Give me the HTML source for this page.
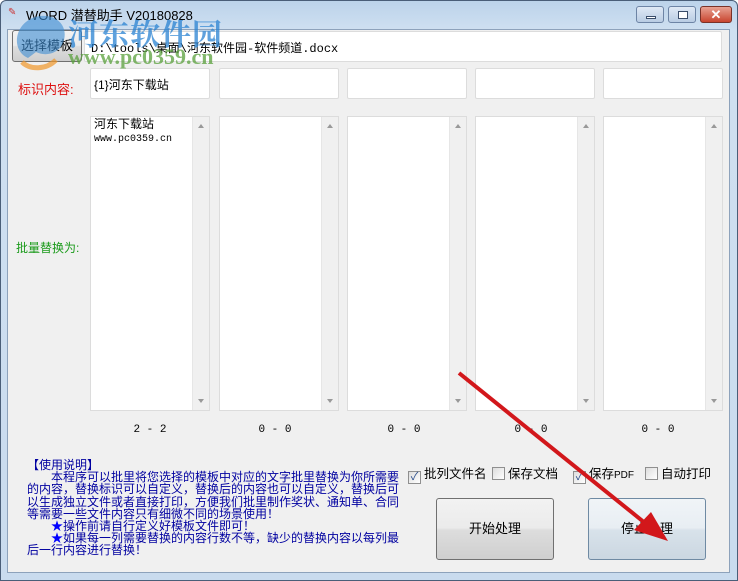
<!DOCTYPE html>
<html><head><meta charset="utf-8"><style>
*{margin:0;padding:0;box-sizing:border-box}
body{width:738px;height:581px;overflow:hidden;background:#fff;font-family:"Liberation Sans","Noto Sans CJK SC",sans-serif;font-size:12px;position:relative}
.win{position:absolute;left:0;top:0;width:738px;height:581px;background:linear-gradient(#bcd3ea,#cfe0f1 30px,#c9dbee);border:1px solid #4a5e78;border-radius:6px 6px 0 0}
.client{position:absolute;left:7px;top:29px;width:723px;height:544px;background:#f0f0f0;border:1px solid #8da2bb}
.a{position:absolute}
.tb{border:1px solid #dcdcdc;background:#fff;border-radius:2px}
.ta{border:1px solid #dcdcdc;background:#fff}
.sb{position:absolute;right:0;top:0;width:17px;height:100%;background:#f0f0f0;border-left:1px solid #e6e6e6}
.sb:before{content:"";position:absolute;left:5px;top:7px;border:3.5px solid transparent;border-bottom:4px solid #999;border-top:0}
.sb:after{content:"";position:absolute;left:5px;bottom:7px;border:3.5px solid transparent;border-top:4px solid #999;border-bottom:0}
.cnt{position:absolute;top:424px;width:120px;text-align:center;font-family:"Liberation Mono",monospace;font-size:11px}
.btn{position:absolute;border:1px solid #707070;border-radius:3px;background:linear-gradient(#f2f2f2,#ebebeb 48%,#dddddd 52%,#cfcfcf);text-align:center;font-size:13px}
.cb{position:absolute;top:463px;font-size:12.5px;white-space:nowrap}
.cb i{display:inline-block;width:13px;height:13px;border:1px solid #8f8f8f;background:linear-gradient(135deg,#ddd,#fff);vertical-align:-2px;margin-right:3px;font-style:normal;font-size:11px;line-height:11px;color:#2a4d8c;text-align:center}
.ins{position:absolute;left:27px;top:459px;color:#0000a0;font-size:12px;line-height:12.2px;white-space:nowrap;font-family:"Noto Sans CJK SC",sans-serif}
</style></head><body>
<div class="win"></div>
<div class="a" style="left:8px;top:7px;width:14px;height:8px;color:#c33;font-size:10px">✎</div>
<div class="a" style="left:26px;top:5px;font-size:13px;color:#000">WORD 潜替助手 V20180828</div>
<div class="a" style="left:636px;top:6px;width:28px;height:17px;border:1px solid #6d84a5;border-radius:3px;background:linear-gradient(#dfe9f5,#b9cce3)"><div class="a" style="left:9px;top:9px;width:10px;height:3px;background:#fff;border:1px solid #3a4d6a"></div></div>
<div class="a" style="left:668px;top:6px;width:28px;height:17px;border:1px solid #6d84a5;border-radius:3px;background:linear-gradient(#dfe9f5,#b9cce3)"><div class="a" style="left:9px;top:4px;width:10px;height:8px;border:1px solid #3a4d6a;background:#fff"></div></div>
<div class="a" style="left:700px;top:6px;width:32px;height:17px;border:1px solid #7a3228;border-radius:3px;background:linear-gradient(#e8a293,#c8452f);color:#fff;font-weight:bold;text-align:center;font-size:13px;line-height:15px">✕</div>
<div class="client"></div>
<div class="btn" style="left:12px;top:30px;width:70px;height:32px;line-height:30px">选择模板</div>
<div class="a tb" style="left:84px;top:31px;width:638px;height:31px;padding:7px 6px;font-family:'Liberation Mono','Noto Sans CJK SC',monospace;font-size:12px">D:\tools\桌面\河东软件园-软件频道.docx</div>
<div class="a" style="left:18px;top:79px;color:#d11;font-size:13px">标识内容:</div>
<div class="a tb" style="left:90px;top:68px;width:120px;height:31px;padding:7px 3px;font-size:12px">{1}河东下载站</div>
<div class="a tb" style="left:219px;top:68px;width:120px;height:31px"></div>
<div class="a tb" style="left:347px;top:68px;width:120px;height:31px"></div>
<div class="a tb" style="left:475px;top:68px;width:120px;height:31px"></div>
<div class="a tb" style="left:603px;top:68px;width:120px;height:31px"></div>
<div class="a" style="left:16px;top:239px;color:#1a9a1a;font-size:12px">批量替换为:</div>
<div class="a ta" style="left:90px;top:116px;width:120px;height:295px;padding:1px 3px;font-size:12px;line-height:13px">河东下载站<br><span style="font-family:'Liberation Mono',monospace;font-size:10px">www.pc0359.cn</span><div class="sb"></div></div>
<div class="a ta" style="left:219px;top:116px;width:120px;height:295px"><div class="sb"></div></div>
<div class="a ta" style="left:347px;top:116px;width:120px;height:295px"><div class="sb"></div></div>
<div class="a ta" style="left:475px;top:116px;width:120px;height:295px"><div class="sb"></div></div>
<div class="a ta" style="left:603px;top:116px;width:120px;height:295px"><div class="sb"></div></div>
<div class="cnt" style="left:90px">2 - 2</div>
<div class="cnt" style="left:215px">0 - 0</div>
<div class="cnt" style="left:344px">0 - 0</div>
<div class="cnt" style="left:471px">0 - 0</div>
<div class="cnt" style="left:598px">0 - 0</div>
<div class="ins">【使用说明】<br>&emsp;&emsp;本程序可以批里将您选择的模板中对应的文字批里替换为你所需要<br>的内容，替换标识可以自定义，替换后的内容也可以自定义，替换后可<br>以生成独立文件或者直接打印，方便我们批里制作奖状、通知单、合同<br>等需要一些文件内容只有细微不同的场景使用！<br>&emsp;&emsp;<span style="color:#00f">★</span>操作前请自行定义好模板文件即可！<br>&emsp;&emsp;<span style="color:#00f">★</span>如果每一列需要替换的内容行数不等，缺少的替换内容以每列最<br>后一行内容进行替换！</div>
<div class="cb" style="left:408px"><i>✓</i>批列文件名</div>
<div class="cb" style="left:492px"><i></i>保存文档</div>
<div class="cb" style="left:573px"><i>✓</i>保存<span style="font-size:10px">PDF</span></div>
<div class="cb" style="left:645px"><i></i>自动打印</div>
<div class="btn" style="left:436px;top:498px;width:118px;height:62px;line-height:60px">开始处理</div>
<div class="btn" style="left:588px;top:498px;width:118px;height:62px;line-height:60px;border-color:#6f8aa3;background:linear-gradient(#f0f4f7,#e8eef3 48%,#d8e2ea 52%,#cbd7e1)">停止处理</div>
<div class="a" style="left:68px;top:10px;font-size:30px;font-weight:bold;color:rgba(40,130,210,0.75);font-family:'Noto Serif CJK SC',serif;letter-spacing:1px">河东软件园</div>
<div class="a" style="left:68px;top:44px;font-size:22px;font-weight:bold;color:rgba(90,160,60,0.75);font-family:'Liberation Serif',serif">www.pc0359.cn</div>
<svg class="a" style="left:0;top:0" width="738" height="581">
<path d="M28 58 C10 50 14 20 40 16 C60 14 70 30 62 45 C56 55 44 56 36 52 Z" fill="rgba(60,140,210,0.6)"/>
<path d="M22 62 C30 70 46 70 56 60" stroke="rgba(240,150,40,0.7)" stroke-width="5" fill="none"/>
<line x1="459" y1="373" x2="650" y2="527" stroke="#d2171b" stroke-width="4"/>
<polygon points="668,541 634,530 651,512" fill="#d2171b"/>
</svg>
</body></html>
